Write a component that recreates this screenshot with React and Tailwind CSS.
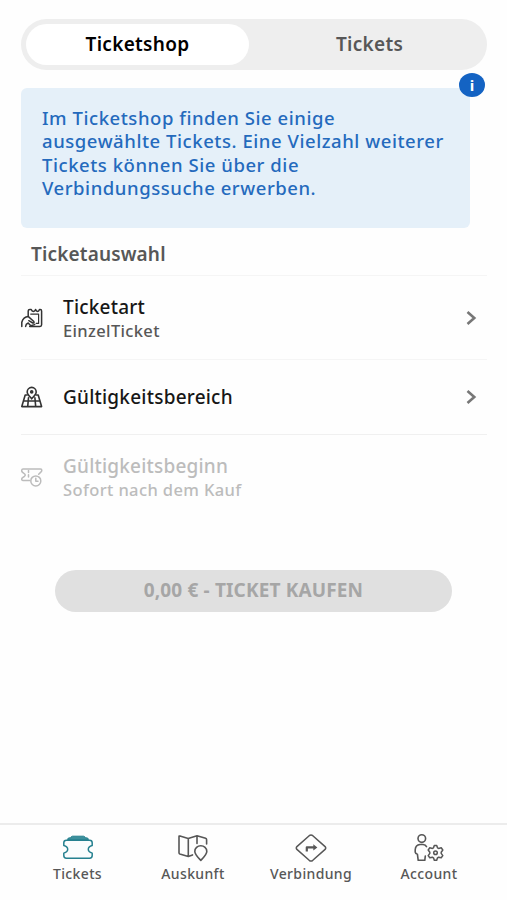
import React, { useState } from 'react';

const TicketHandIcon = () => (
  <svg width="24" height="22" viewBox="0.8 -0.8 24 22" fill="none" stroke="currentColor" strokeWidth="1.5" strokeLinecap="round" strokeLinejoin="round">
    <path d="M8 8.5V3.2Q8 1.6 9.6 1.6H11Q11.6 3.6 13.2 3.6T15.4 1.6Q16 3.6 17.4 3.6T19.3 1.6H20Q21.4 1.6 21.4 3.2V17Q21.4 18.6 19.8 18.6H9.5" />
    <path d="M10.5 6.3H18.4V15.6H16" strokeWidth="1.2" />
    <path d="M1.6 18.6V14.5Q3 9.2 8.2 8.8L13.4 13.4Q14.6 15.3 12.6 15.2L8.6 12.9M5.4 18.6Q5.6 16 8 15.2L10.5 18L14.5 16.8" />
  </svg>
);

const MapPinIcon = () => (
  <svg width="24" height="24" viewBox="0.8 -1.2 24 24" fill="none" stroke="currentColor" strokeWidth="1.6" strokeLinecap="round" strokeLinejoin="round">
    <path d="M11.5 12.6C9 9.7 7 8 7 5.7A4.5 4.5 0 0 1 16 5.7C16 8 14 9.7 11.5 12.6Z" />
    <circle cx="11.5" cy="5.7" r="1" />
    <path d="M7 8.8H5L1.6 20.4H21.4L18 8.8H16M3.3 14.8H19.9M8.3 11.5L7.5 20.4M14.7 11.5L15.5 20.4" />
  </svg>
);

const TicketClockIcon = () => (
  <svg width="24" height="22" viewBox="0.8 0 24 22" fill="none" stroke="currentColor" strokeWidth="1.5" strokeLinecap="round" strokeLinejoin="round">
    <path d="M9.5 14.4H2.6Q1.5 14.4 1.5 13.2Q1.5 12.3 2.4 11.7L4.3 10.3Q5.6 9.2 4.5 8L2.4 6.3Q1.5 5.6 1.5 4.6Q1.5 3 2.8 3H20.4Q21.6 3 21.6 4.2Q21.6 5.4 20.6 6.1L18.5 8.2" />
    <path d="M8.3 4.6V6.6M8.3 8.8V11" />
    <circle cx="15.6" cy="14.9" r="5" />
    <path d="M15.6 12.2V15.2H17.8" />
  </svg>
);

const TicketsIcon = () => (
  <svg width="32" height="28" viewBox="0 0 32 28" fill="none" stroke="#25808f" strokeWidth="1.5" strokeLinejoin="round">
    <path d="M5.8 6V4.8Q6 3.9 7.5 3.8H8.6Q9 2.4 10.5 2.2H21.5Q23 2.4 23.4 3.8H24.5Q26 3.9 26.2 4.8V6Z" fill="#3d909c" strokeWidth="1" />
    <path d="M4.4 6.2H27.6Q30.2 6.2 30.2 8.8V11.4Q26.3 12.4 26.3 15.2T30.2 19.1V21.6Q30.2 24.2 27.6 24.2H4.4Q1.8 24.2 1.8 21.6V19.1Q5.7 18 5.7 15.2T1.8 11.4V8.8Q1.8 6.2 4.4 6.2Z" fill="#fafcfd" />
  </svg>
);

const AuskunftIcon = () => (
  <svg width="32" height="28" viewBox="0 0 32 28" fill="none" stroke="currentColor" strokeWidth="1.6" strokeLinecap="round" strokeLinejoin="round">
    <path d="M15.5 20.9L11.3 22.5L2.8 19.9Q2 19.6 2 18.7V2.7Q2 1.7 3 2L11.2 4.4L20 1.8L28.6 4.3Q29.6 4.6 29.6 5.8V10M11.3 4.5V22.4M20 1.9V9.5" />
    <path d="M23.8 26.4C20.3 22.6 17.8 20.2 17.8 17.4A6 5.6 0 0 1 29.8 17.4C29.8 20.2 27.3 22.6 23.8 26.4Z" />
  </svg>
);

const VerbindungIcon = () => (
  <svg width="32" height="28" viewBox="0 0 32 28" fill="none" stroke="currentColor" strokeWidth="1.5" strokeLinecap="round" strokeLinejoin="round">
    <path d="M14.2 1.7Q16 .2 17.8 1.7L30.1 12.6Q31.3 14 30.1 15.4L17.8 26.3Q16 27.8 14.2 26.3L1.9 15.4Q.7 14 1.9 12.6Z" />
    <path d="M11.8 17.4V13.4H19" strokeWidth="2.2" strokeLinecap="butt" />
    <path d="M18.3 10.2L22.4 13.4L18.3 16.6Z" fill="currentColor" stroke="none" />
  </svg>
);

const AccountIcon = () => (
  <svg width="32" height="28" viewBox="0 0 32 28" fill="none" stroke="currentColor" strokeWidth="1.6" strokeLinecap="round" strokeLinejoin="round">
    <circle cx="8.8" cy="4.6" r="3.8" />
    <path d="M13.5 12.6Q12.6 10.7 10 10.5H7Q2.5 10.9 2.2 15.7V18.2Q2.4 19.8 4.4 20.2L5.2 26.3H11.8L12.3 22" />
    <path d="M21.3 11.4H23.7L24.5 13.8L25.6 14.4L28.2 13.8L29.8 16L28.2 18.2V19.4L29.8 21.6L28.2 23.8L25.6 23.2L24.5 23.8L23.7 26.2H21.3L20.5 23.8L19.4 23.2L16.8 23.8L15.2 21.6L16.8 19.4V18.2L15.2 16L16.8 13.8L19.4 14.4L20.5 13.8Z" strokeWidth="1.5" />
    <circle cx="22.5" cy="18.8" r="1.8" strokeWidth="1.5" />
  </svg>
);

const ChevronIcon = () => (
  <svg width="12" height="16" viewBox="0 0 12 16" fill="none" stroke="#777" strokeWidth="2.6">
    <path d="M1.5 2L8.3 8L1.5 14" />
  </svg>
);

const navItems = [
  { name: 'Tickets', icon: TicketsIcon, width: 'w-[117px]' },
  { name: 'Auskunft', icon: AuskunftIcon, width: 'w-[114px]' },
  { name: 'Verbindung', icon: VerbindungIcon, width: 'w-[122px]' },
  { name: 'Account', icon: AccountIcon, width: 'w-[114px]' },
];

function App() {
  const [tab, setTab] = useState('shop');

  return (
    <div className="flex h-[900px] w-[507px] flex-col overflow-hidden bg-[#fefefe] font-['Noto_Sans',sans-serif] font-medium text-[#575757]">
      <main className="flex-1 px-[21px] pt-[19px]">
        {/* Tabs */}
        <div className="flex h-[51px] w-[466px] rounded-full bg-[#eee] p-[5px] text-[19px] font-semibold tracking-[0.3px]">
          <button
            onClick={() => setTab('shop')}
            className={`w-[223px] rounded-full pb-px ${tab === 'shop' ? 'bg-white text-black' : ''}`}
          >
            Ticketshop
          </button>
          <button
            onClick={() => setTab('tickets')}
            className={`flex-1 rounded-full pb-px pl-2 ${tab === 'tickets' ? 'bg-white text-black' : ''}`}
          >
            Tickets
          </button>
        </div>

        {/* Info box */}
        <div className="relative mt-[18px] h-[140px] w-[449px] rounded-md bg-[#e5f0f9] pl-[21px] pt-[18px] text-[18.5px] leading-[23.4px] text-[#246abd]">
          <p className="tracking-[0.55px]">
            Im Ticketshop finden Sie einige
            <br />
            ausgewählte Tickets. Eine Vielzahl weiterer
            <br />
            Tickets können Sie über die
            <br />
            Verbindungssuche erwerben.
          </p>
          <span className="absolute -right-[15px] -top-[15px] flex h-6 w-[26px] items-center justify-center rounded-[50%] bg-[#1463c3] text-[15px] font-bold leading-none text-white">
            i
          </span>
        </div>

        {/* Ticket selection */}
        <h2 className="flex h-[47px] items-center pl-[10px] pt-1.5 text-[19px] font-semibold tracking-[0.15px]">Ticketauswahl</h2>

        <div className="flex h-[84px] w-[466px] items-center border-t border-[#f5f5f5] pr-[9px]">
          <span className="w-[42px] text-[#333]"><TicketHandIcon /></span>
          <div className="flex-1 pt-0.5">
            <p className="text-[19px] leading-6 tracking-[0.2px] text-[#171717]">Ticketart</p>
            <p className="text-[16.5px] leading-6 tracking-[0.35px]">EinzelTicket</p>
          </div>
          <ChevronIcon />
        </div>
        <div className="flex h-[75px] w-[466px] items-center border-t border-[#f5f5f5] pr-[9px]">
          <span className="w-[42px] text-[#333]"><MapPinIcon /></span>
          <p className="flex-1 text-[19px] leading-6 tracking-[0.22px] text-[#171717]">Gültigkeitsbereich</p>
          <ChevronIcon />
        </div>
        <div className="flex h-[84px] w-[466px] items-center border-t border-[#f0f0f0] text-[#bcbcbc]">
          <span className="w-[42px]"><TicketClockIcon /></span>
          <div className="flex-1 pt-0.5">
            <p className="text-[19px] leading-6 tracking-[0.2px]">Gültigkeitsbeginn</p>
            <p className="text-[16.5px] leading-6 tracking-[0.38px]">Sofort nach dem Kauf</p>
          </div>
        </div>

        <button disabled className="ml-[34px] mt-[52px] h-[42px] w-[397px] rounded-full bg-[#e0e0e0] pb-px text-[19px] font-bold tracking-[0.15px] text-[#a6a6a6]">
          0,00 € - TICKET KAUFEN
        </button>
      </main>

      {/* Bottom navigation */}
      <nav className="flex h-[77px] border-t-2 border-[#ececec] pl-[19px] pt-[9px]">
        {navItems.map(({ name, icon: Icon, width }) => (
          <a key={name} className={`flex flex-col items-center ${width}`}>
            <Icon />
            <span className="mt-0.5 text-sm leading-5 tracking-[0.35px]">{name}</span>
          </a>
        ))}
      </nav>
    </div>
  );
}

export default App;
